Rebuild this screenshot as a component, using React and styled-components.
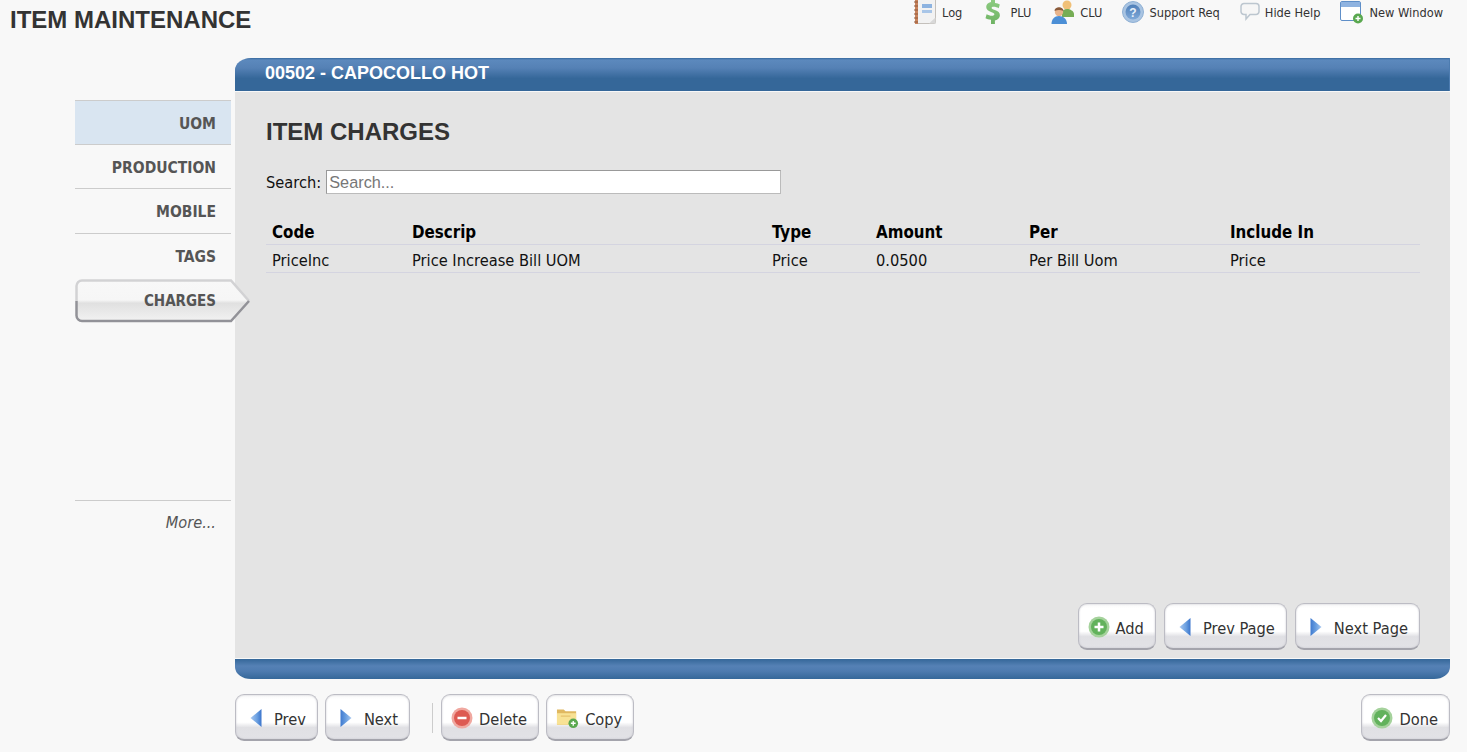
import React from 'react';
import styled, { createGlobalStyle } from 'styled-components';

const UI_FONT = '"DejaVu Sans", Verdana, sans-serif';

const GlobalStyle = createGlobalStyle`
  html, body {
    margin: 0;
    padding: 0;
    background: #f8f8f8;
  }
  * { box-sizing: border-box; }
`;

const LogIcon = () => (
  <svg width="23" height="24" viewBox="0 0 23 24">
    <rect x="1.500" y="-1" width="20" height="24.500" rx="1" fill="#f2f2f2" stroke="#c4c0bb" />
    <rect x="1" y="-1" width="3" height="25" fill="#c9835c" />
    <path d="M0 2h4M0 6h4M0 10h4M0 14h4M0 18h4M0 22h4" stroke="#8f5a3c" strokeWidth="1" />
    <rect x="8" y="4" width="10" height="4" fill="#8db3e0" />
    <rect x="8" y="10" width="10" height="3" fill="#a9c6e8" />
    <path d="M15 23.500l6.500-6v6z" fill="#d8d8d8" />
  </svg>
);

const DollarSvg = styled.svg`
  margin: 0 3px 0 2px;
`;

const DollarIcon = () => (
  <DollarSvg width="18" height="26" viewBox="0 0 18 26">
    <defs>
      <linearGradient id="dollarFill" x1="0" y1="0" x2="0" y2="1">
        <stop offset="0" stopColor="#8ccb80" />
        <stop offset="1" stopColor="#6fb364" />
      </linearGradient>
    </defs>
    <path d="M7 1h4v3c2 .2 3.500 .7 4.800 1.400l-1.100 3.800c-1.500-.8-3.300-1.400-5-1.400-1.500 0-2.100.5-2.100 1.200 0 .8 1 1.300 3.300 2.100 3.400 1.200 5 2.700 5 5.200 0 2.500-1.800 4.500-5 5.100V25H7v-4.300c-2.200-.1-4.200-.8-5.500-1.500l1.100-3.900c1.500.8 3.500 1.500 5.400 1.500 1.500 0 2.400-.6 2.400-1.500 0-.9-.8-1.400-2.800-2.100-3-1-5.400-2.500-5.400-5.200 0-2.500 1.800-4.400 4.800-5z" fill="url(#dollarFill)" />
  </DollarSvg>
);

const PeopleIcon = () => (
  <svg width="24" height="24" viewBox="0 0 24 24">
    <circle cx="16" cy="5" r="4.500" fill="#f0c078" />
    <path d="M11 17v-4c0-2 2-4 5-4s7 2 7 5v3z" fill="#76ad55" />
    <circle cx="8" cy="12" r="4.200" fill="#e8b48c" />
    <path d="M3.500 11c0-5 9-5 9 0-3-1.500-6-1.500-9 0z" fill="#8a5a3a" />
    <path d="M0.500 24c0-5 3-8 7.500-8s8 3 8 8z" fill="#4c8fd6" />
  </svg>
);

const HelpIcon = () => (
  <svg width="22" height="22" viewBox="0 0 22 22">
    <defs>
      <linearGradient id="helpFill" x1="0" y1="0" x2="0" y2="1">
        <stop offset="0" stopColor="#4f7fb8" />
        <stop offset="1" stopColor="#7ea8d8" />
      </linearGradient>
    </defs>
    <circle cx="11" cy="11" r="10.500" fill="#a9c4e2" stroke="#8fb0d4" />
    <circle cx="11" cy="11" r="7.500" fill="url(#helpFill)" />
    <text x="11" y="15.500" textAnchor="middle" fontFamily="Liberation Sans, sans-serif" fontWeight="700" fontSize="12" fill="#e8f0fa">?</text>
  </svg>
);

const BubbleIcon = () => (
  <svg width="20" height="20" viewBox="0 0 20 20">
    <path d="M4 1.500h12a3 3 0 0 1 3 3v5a3 3 0 0 1-3 3h-6l-4 4.500v-4.500H4a3 3 0 0 1-3-3v-5a3 3 0 0 1 3-3z" fill="#f6f6f6" stroke="#bcc6cf" strokeWidth="1.500" />
  </svg>
);

const PlusBadge = ({ x, y, r }) => (
  <g>
    <circle cx={x} cy={y} r={r} fill="#5aa84f" />
    <path d={`M${x - r / 2} ${y}h${r}M${x} ${y - r / 2}v${r}`} stroke="#fff" strokeWidth="1.400" />
  </g>
);

const WindowIcon = () => (
  <svg width="24" height="24" viewBox="0 0 24 24">
    <rect x="0.500" y="1.500" width="20" height="19" rx="1.500" fill="#fff" stroke="#5f8fc8" />
    <rect x="1" y="2" width="19" height="5" fill="#8fb3e0" />
    <PlusBadge x={18} y={18.500} r={5} />
  </svg>
);

const ArrowLeft = () => (
  <svg width="12" height="20" viewBox="0 0 12 20">
    <defs>
      <linearGradient id="arrowLeftFill" x1="0" y1="0" x2="1" y2="0">
        <stop offset="0" stopColor="#a8c8f0" />
        <stop offset="0.6" stopColor="#6a9fe0" />
        <stop offset="1" stopColor="#3a74cc" />
      </linearGradient>
    </defs>
    <path d="M11.500 1v18L0.500 10z" fill="url(#arrowLeftFill)" />
  </svg>
);

const ArrowRight = () => (
  <svg width="12" height="20" viewBox="0 0 12 20">
    <defs>
      <linearGradient id="arrowRightFill" x1="0" y1="0" x2="1" y2="0">
        <stop offset="0" stopColor="#3f7ad0" />
        <stop offset="0.5" stopColor="#6a9fe0" />
        <stop offset="1" stopColor="#a8c8f0" />
      </linearGradient>
    </defs>
    <path d="M0.500 1v18l11-9z" fill="url(#arrowRightFill)" />
  </svg>
);

const RoundIcon = ({ color, light, children }) => (
  <svg width="22" height="22" viewBox="0 0 22 22">
    <circle cx="11" cy="11" r="10.500" fill={color} />
    <circle cx="11" cy="11" r="8" fill={light} />
    {children}
  </svg>
);

const FolderIcon = () => (
  <svg width="23" height="22" viewBox="0 0 24 22">
    <path d="M1 2h7l2 2h11v14H1z" fill="#e0b860" />
    <path d="M1 6h20v12H1z" fill="#f8e294" />
    <path d="M5 9h10" stroke="#e0b860" strokeWidth="1" />
    <PlusBadge x={18} y={16.500} r={5} />
  </svg>
);

const tools = [
  { label: 'Log', icon: <LogIcon /> },
  { label: 'PLU', icon: <DollarIcon /> },
  { label: 'CLU', icon: <PeopleIcon /> },
  { label: 'Support Req', icon: <HelpIcon /> },
  { label: 'Hide Help', icon: <BubbleIcon /> },
  { label: 'New Window', icon: <WindowIcon /> },
];

const navItems = ['UOM', 'PRODUCTION', 'MOBILE', 'TAGS'];

const columns = [
  { title: 'Code', value: 'PriceInc', width: 140 },
  { title: 'Descrip', value: 'Price Increase Bill UOM', width: 360 },
  { title: 'Type', value: 'Price', width: 104 },
  { title: 'Amount', value: '0.0500', width: 153 },
  { title: 'Per', value: 'Per Bill Uom', width: 201 },
  { title: 'Include In', value: 'Price', width: 196 },
];

export default function App() {
  return (
    <Page>
      <GlobalStyle />
      <TopBar>
        <PageTitle>ITEM MAINTENANCE</PageTitle>
        <Tools>
          {tools.map((t) => (
            <Tool key={t.label}>
              {t.icon}
              <span>{t.label}</span>
            </Tool>
          ))}
        </Tools>
      </TopBar>

      <Main>
        <SideNav>
          {navItems.map((item, i) => (
            <NavItem key={item} $hover={i === 0} $last={i === navItems.length - 1}>{item}</NavItem>
          ))}
          <ActiveItem>
            <svg width="176" height="44" viewBox="0 0 176 44">
              <defs>
                <linearGradient id="tabFill" x1="0" y1="0" x2="0" y2="1">
                  <stop offset="0" stopColor="#f8f8f8" />
                  <stop offset="0.48" stopColor="#f6f6f6" />
                  <stop offset="0.56" stopColor="#e0e0e0" />
                  <stop offset="1" stopColor="#f2f2f2" />
                </linearGradient>
              </defs>
              <path d="M7 1.500h149l18 20.500-18 20H7a5.500 5.500 0 0 1-5.500-5.500V7A5.500 5.500 0 0 1 7 1.500z" fill="url(#tabFill)" />
              <path d="M1.500 22V7A5.500 5.500 0 0 1 7 1.500h149l18 20.500" fill="none" stroke="#d2d2d4" strokeWidth="2.500" />
              <path d="M1.500 22v14.500A5.500 5.500 0 0 0 7 42h149l18-20" fill="none" stroke="#929298" strokeWidth="2.500" />
            </svg>
            <ActiveLabel>CHARGES</ActiveLabel>
          </ActiveItem>
          <MoreLink>More...</MoreLink>
        </SideNav>

        <Content>
          <Panel>
            <PanelHead>00502 - CAPOCOLLO HOT</PanelHead>
            <PanelBody>
              <SectionTitle>ITEM CHARGES</SectionTitle>
              <SearchRow>
                <SearchLabel>Search:</SearchLabel>
                <SearchInput placeholder="Search..." />
              </SearchRow>
              <Table>
                <HeadRow>
                  {columns.map((c) => (
                    <HeadCell key={c.title} $w={c.width}>{c.title}</HeadCell>
                  ))}
                </HeadRow>
                <BodyRow>
                  {columns.map((c) => (
                    <Cell key={c.title} $w={c.width}>{c.value}</Cell>
                  ))}
                </BodyRow>
              </Table>
              <PanelActions>
                <Button>
                  <RoundIcon color="#a5d29c" light="#62b25c">
                    <path d="M6.500 11h9M11 6.500v9" stroke="#fff" strokeWidth="2.500" />
                  </RoundIcon>
                  Add
                </Button>
                <ArrowButton><ArrowLeft />Prev Page</ArrowButton>
                <ArrowButton><ArrowRight />Next Page</ArrowButton>
              </PanelActions>
            </PanelBody>
            <PanelFoot />
          </Panel>

          <BottomBar>
            <ArrowButton><ArrowLeft />Prev</ArrowButton>
            <ArrowButton><ArrowRight />Next</ArrowButton>
            <Divider />
            <Button>
              <RoundIcon color="#f0a8a0" light="#dd5a52">
                <path d="M6.500 11h9" stroke="#fff" strokeWidth="2.500" />
              </RoundIcon>
              Delete
            </Button>
            <Button><FolderIcon />Copy</Button>
            <BottomSpacer />
            <Button>
              <RoundIcon color="#a5d29c" light="#62b25c">
                <path d="M7 11l3 3 5-6" fill="none" stroke="#fff" strokeWidth="2.200" />
              </RoundIcon>
              Done
            </Button>
          </BottomBar>
        </Content>
      </Main>
    </Page>
  );
}

const Page = styled.div`
  width: 1467px;
  height: 752px;
  overflow: hidden;
  background: #f8f8f8;
  font-family: ${UI_FONT};
  font-stretch: condensed;
  color: #333;
`;

const TopBar = styled.header`
  height: 57px;
  display: flex;
  justify-content: space-between;
  align-items: flex-start;
  padding: 0 24px 0 10px;
`;

const PageTitle = styled.h1`
  margin: 8px 0 0;
  font: 700 24px/24px "Liberation Sans", Arial, sans-serif;
  color: #333;
`;

const Tools = styled.div`
  display: flex;
  gap: 20px;
  height: 24px;
`;

const Tool = styled.div`
  display: flex;
  align-items: center;
  gap: 5px;
  font-size: 12.700px;
  color: #333;
`;

const Main = styled.div`
  display: flex;
  align-items: flex-start;
  padding-left: 75px;
`;

const SideNav = styled.nav`
  width: 160px;
  flex-shrink: 0;
  padding-top: 43px;
  display: flex;
  flex-direction: column;
`;

const NavItem = styled.div`
  width: 156px;
  height: 44.500px;
  padding: 3px 15px 0 0;
  display: flex;
  align-items: center;
  justify-content: flex-end;
  font-size: 15.500px;
  font-weight: 700;
  color: #555;
  border-bottom: 1px solid ${(p) => (p.$last ? 'transparent' : '#ccc')};
  background: ${(p) => (p.$hover ? '#d9e5f1' : 'transparent')};
  border-top: ${(p) => (p.$hover ? '1px solid #ccc' : '0')};
`;

const ActiveItem = styled.div`
  position: relative;
  height: 44px;
  margin-top: 1px;
  z-index: 1;
  svg { display: block; }
`;

const ActiveLabel = styled.span`
  position: absolute;
  right: 19px;
  top: 13px;
  font-size: 15px;
  font-weight: 700;
  color: #555;
`;

const MoreLink = styled.div`
  width: 156px;
  margin-top: 177px;
  height: 46px;
  border-top: 1px solid #ccc;
  padding: 12px 15px 0 0;
  text-align: right;
  font-size: 16.200px;
  font-style: italic;
  color: #555;
`;

const Content = styled.div`
  width: 1215px;
  flex-shrink: 0;
`;

const Panel = styled.section`
  display: flex;
  flex-direction: column;
  height: 622px;
  padding-top: 1px;
`;

const PanelHead = styled.div`
  height: 33px;
  padding: 5px 0 0 30px;
  border-top-left-radius: 16px 12px;
  background: linear-gradient(#376a9f 0, #5c89bd 6%, #5581b5 30%, #356799 62%, #356799 100%);
  color: #fff;
  font: 700 18px/20px "Liberation Sans", Arial, sans-serif;
  box-shadow: inset -1px 0 0 #4d7cb0;
`;

const PanelBody = styled.div`
  flex: 1;
  margin-top: 1px;
  background: #e4e4e4;
  padding: 0 30px 8px 31px;
  display: flex;
  flex-direction: column;
`;

const SectionTitle = styled.h2`
  margin: 25px 0 0;
  font: 700 24px/30px "Liberation Sans", Arial, sans-serif;
  color: #333;
`;

const SearchRow = styled.div`
  display: flex;
  align-items: center;
  gap: 5px;
  margin-top: 23px;
`;

const SearchLabel = styled.label`
  font-size: 16.300px;
  color: #111;
`;

const SearchInput = styled.input`
  width: 455px;
  height: 24px;
  padding: 1px 2px;
  border: 1px solid #bbb;
  border-top-color: #999;
  border-left-color: #999;
  background: #fff;
  font: 16.300px "Liberation Sans", Arial, sans-serif;
  &::placeholder { color: #777; opacity: 1; }
`;

const Table = styled.div`
  margin-top: 23px;
  width: 1154px;
`;

const HeadRow = styled.div`
  display: flex;
  height: 28px;
  padding-top: 2px;
  align-items: center;
  color: #000;
  border-bottom: 1px solid #d4d4e0;
`;

const BodyRow = styled.div`
  display: flex;
  height: 28px;
  padding-top: 4px;
  align-items: center;
  color: #111;
  border-bottom: 1px solid #d4d4e0;
`;

const Cell = styled.div`
  width: ${(p) => p.$w}px;
  padding-left: 6px;
  font-size: 16.300px;
  white-space: nowrap;
`;

const HeadCell = styled(Cell)`
  font-size: 16.800px;
  font-weight: 700;
`;

const PanelActions = styled.div`
  margin-top: auto;
  display: flex;
  justify-content: flex-end;
  gap: 8px;
`;

const PanelFoot = styled.div`
  height: 20px;
  margin-top: 1px;
  border-bottom-left-radius: 16px 12px;
  border-bottom-right-radius: 16px 12px;
  background: linear-gradient(#356799 0, #5581b5 35%, #4e7bb0 60%, #356799 100%);
`;

const BottomBar = styled.div`
  margin-top: 15px;
  display: flex;
  align-items: center;
  gap: 7px;
`;

const BottomSpacer = styled.div`
  flex: 1;
`;

const Divider = styled.div`
  width: 1px;
  height: 30px;
  margin: 0 1px 0 15px;
  background: #ccc;
`;

const Button = styled.button`
  height: 47px;
  padding: 4px 11px 0 9px;
  display: flex;
  align-items: center;
  gap: 6px;
  border: 1px solid #bcbcc4;
  border-bottom: 2px solid #a4a4ac;
  border-radius: 9px;
  background: linear-gradient(#f8f8f8 0, #ffffff 10%, #ffffff 62%, #e0e0e4 74%, #e2e2e6 100%);
  box-shadow: inset 0 0 2px #c4c4cc;
  font-family: ${UI_FONT};
  font-stretch: condensed;
  font-size: 16.300px;
  color: #333;
  svg { flex-shrink: 0; margin-top: -2px; }
`;

const ArrowButton = styled(Button)`
  padding-left: 14px;
  gap: 12px;
`;
